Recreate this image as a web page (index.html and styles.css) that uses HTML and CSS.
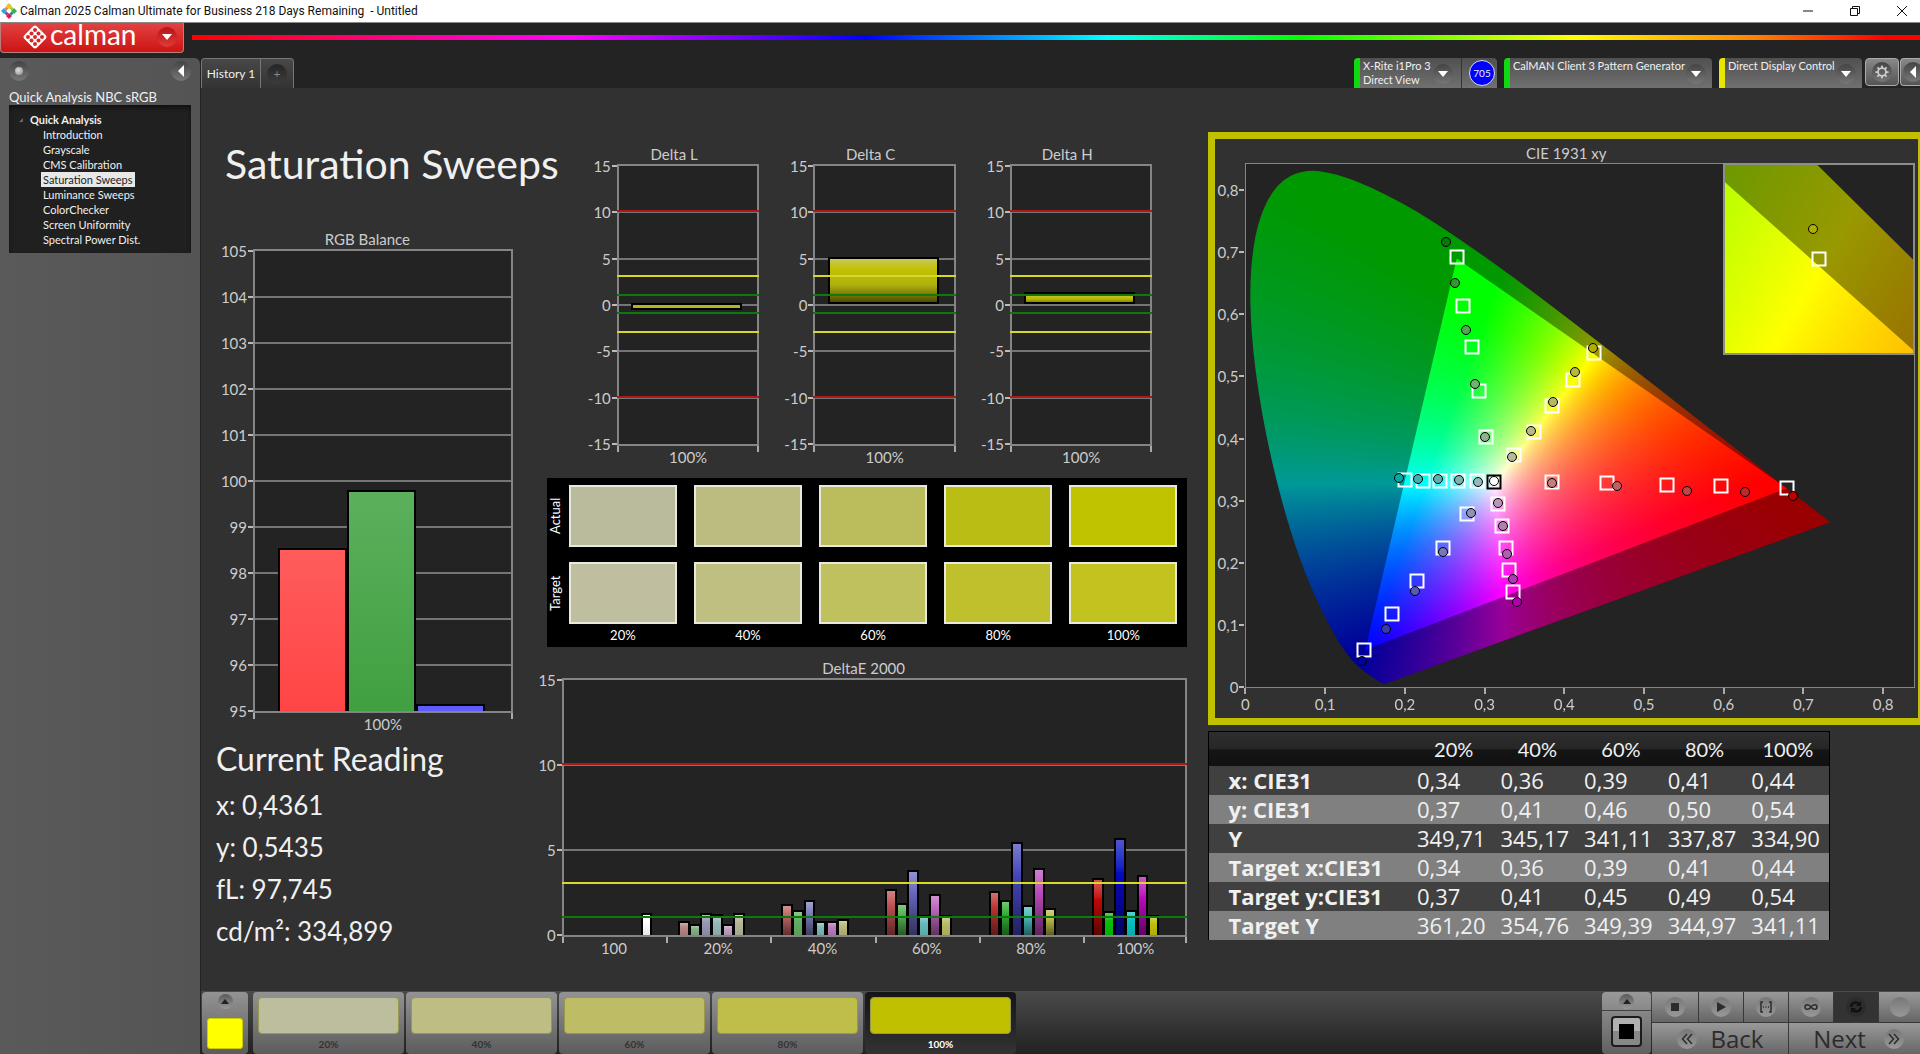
FILE: index.html
```html
<!DOCTYPE html>
<html lang="en">
	<head>
		<meta charset="UTF-8" />
		<meta name="viewport" content="width=device-width, initial-scale=1.0" />
		<title>Calman 2025 Calman Ultimate for Business</title>
		<link rel="stylesheet" href="styles.css">
	</head>
	<body>
		<header class="titlebar">
			<svg class="app-icon" viewBox="0 0 16 16" width="16" height="16">
				<path fill="#f2c21b" d="M8 0l3 3-3 3-3-3z" />
				<path fill="#28a9e0" d="M3 5l3 3-3 3-3-3z" />
				<path fill="#3fae49" d="M13 5l3 3-3 3-3-3z" />
				<path fill="#e5174d" d="M8 10l3 3-3 3-3-3z" />
				<path fill="#f58a1f" d="M5.5 3.5l2 2-2 2-2-2z" />
				<path fill="#9ccb3b" d="M10.5 3.5l2 2-2 2-2-2z" />
				<path fill="#8e3a97" d="M5.5 8.5l2 2-2 2-2-2z" />
				<path fill="#16948c" d="M10.5 8.5l2 2-2 2-2-2z" />
			</svg>
			<span class="window-title">Calman 2025 Calman Ultimate for Business 218 Days Remaining &nbsp;- Untitled</span>
			<div class="window-buttons">
				<button aria-label="Minimize"><svg viewBox="0 0 12 12" width="12" height="12"><path d="M1 6h10" /></svg></button>
				<button aria-label="Restore"><svg viewBox="0 0 12 12" width="12" height="12"><path d="M1.5 3.5h7v7h-7zM3.5 3.5v-2h7v7h-2" /></svg></button>
				<button aria-label="Close"><svg viewBox="0 0 12 12" width="12" height="12"><path d="M1 1l10 10M11 1L1 11" /></svg></button>
			</div>
		</header>
		<div class="brandbar">
			<button class="brand">
				<svg viewBox="0 0 24 24" width="24" height="24">
					<path fill="#fff" d="M12 0.5q1 0 2 1l8.500 8.500q2 2 0 4L14 22.500q-2 2-4 0L1.500 14q-2-2 0-4L10 1.500q1-1 2-1z" />
					<g fill="#dc2626">
						<circle cx="12" cy="5" r="2" /><circle cx="8.5" cy="8.5" r="2" /><circle cx="15.5" cy="8.5" r="2" />
						<circle cx="5" cy="12" r="2" /><circle cx="12" cy="12" r="2" /><circle cx="19" cy="12" r="2" />
						<circle cx="8.5" cy="15.5" r="2" /><circle cx="15.5" cy="15.5" r="2" /><circle cx="12" cy="19" r="2" />
					</g>
				</svg>
				<span>calman</span>
				<i class="knob knob-red"><svg viewBox="0 0 10 6" width="10" height="6"><path d="M0 0h10L5 6z" /></svg></i>
			</button>
			<div class="rainbow"></div>
		</div>
		<div class="shell">
			<aside class="sidebar">
				<div class="sidebar-top">
					<button class="knob" aria-label="Record"><i class="lamp"></i></button>
					<button class="knob" aria-label="Collapse"><svg viewBox="0 0 6 12" width="6" height="12"><path d="M6 0v12L0 6z" /></svg></button>
				</div>
				<h2>Quick Analysis NBC sRGB</h2>
				<nav class="tree">
					<strong>Quick Analysis</strong>
					<a href="#">Introduction</a>
					<a href="#">Grayscale</a>
					<a href="#">CMS Calibration</a>
					<a href="#" class="current">Saturation Sweeps</a>
					<a href="#">Luminance Sweeps</a>
					<a href="#">ColorChecker</a>
					<a href="#">Screen Uniformity</a>
					<a href="#">Spectral Power Dist.</a>
				</nav>
			</aside>
			<main>
				<div class="toolbar">
					<div class="tabs">
						<button class="tab">History 1</button>
						<button class="tab tab-add" aria-label="Add tab"><i class="knob knob-dark">+</i></button>
					</div>
					<div class="devices">
						<div class="device green meter">
							<button class="device-pick"><span>X-Rite i1Pro 3<br />Direct View</span><i class="knob"><svg viewBox="0 0 10 6" width="10" height="6"><path d="M0 0h10L5 6z" /></svg></i></button>
							<span class="badge">705</span>
						</div>
						<div class="device green generator">
							<button class="device-pick"><span>CalMAN Client 3 Pattern Generator</span><i class="knob"><svg viewBox="0 0 10 6" width="10" height="6"><path d="M0 0h10L5 6z" /></svg></i></button>
						</div>
						<div class="device yellow display">
							<button class="device-pick"><span>Direct Display Control</span><i class="knob"><svg viewBox="0 0 10 6" width="10" height="6"><path d="M0 0h10L5 6z" /></svg></i></button>
						</div>
						<button class="square-btn" aria-label="Settings"><i class="knob"><svg viewBox="0 0 16 16" width="14" height="14"><g class="gear"><circle cx="8" cy="8" r="4.5" /><path d="M8 .5v3M8 12.5v3M.5 8h3M12.5 8h3M2.7 2.7l2.1 2.1M11.2 11.2l2.1 2.1M13.3 2.7l-2.1 2.1M4.8 11.2l-2.1 2.1" /></g></svg></i></button>
						<button class="square-btn cut" aria-label="Expand"><i class="knob"><svg viewBox="0 0 6 12" width="6" height="12"><path d="M6 0v12L0 6z" /></svg></i></button>
					</div>
				</div>

				<div class="workspace">
					<section class="left">
						<h1>Saturation Sweeps</h1>
						<figure class="chart rgb-balance" id="rgb"><figcaption>RGB Balance</figcaption></figure>
						<div class="reading">
							<h2>Current Reading</h2>
							<p>x: 0,4361</p>
							<p>y: 0,5435</p>
							<p>fL: 97,745</p>
							<p>cd/m²: 334,899</p>
						</div>
					</section>

					<section class="middle">
						<div class="deltas">
							<figure class="chart delta" id="deltaL"><figcaption>Delta L</figcaption></figure>
							<figure class="chart delta" id="deltaC"><figcaption>Delta C</figcaption></figure>
							<figure class="chart delta" id="deltaH"><figcaption>Delta H</figcaption></figure>
						</div>
						<div class="patches" id="patches">
							<span class="side">Actual</span>
							<span class="side">Target</span>
						</div>
						<figure class="chart delta-e" id="deltaE"><figcaption>DeltaE 2000</figcaption></figure>
					</section>

					<section class="right">
						<figure class="chart cie" id="cie">
							<figcaption>CIE 1931 xy</figcaption>
							<div class="plot">
								<canvas></canvas>
								<div class="inset"><canvas></canvas></div>
							</div>
						</figure>
						<table class="readings">
							<thead>
								<tr><th></th><th>20%</th><th>40%</th><th>60%</th><th>80%</th><th>100%</th></tr>
							</thead>
							<tbody>
								<tr><th>x: CIE31</th><td>0,34</td><td>0,36</td><td>0,39</td><td>0,41</td><td>0,44</td></tr>
								<tr><th>y: CIE31</th><td>0,37</td><td>0,41</td><td>0,46</td><td>0,50</td><td>0,54</td></tr>
								<tr><th>Y</th><td>349,71</td><td>345,17</td><td>341,11</td><td>337,87</td><td>334,90</td></tr>
								<tr><th>Target x:CIE31</th><td>0,34</td><td>0,36</td><td>0,39</td><td>0,41</td><td>0,44</td></tr>
								<tr><th>Target y:CIE31</th><td>0,37</td><td>0,41</td><td>0,45</td><td>0,49</td><td>0,54</td></tr>
								<tr><th>Target Y</th><td>361,20</td><td>354,76</td><td>349,39</td><td>344,97</td><td>341,11</td></tr>
							</tbody>
						</table>
					</section>
				</div>

				<footer class="dock">
					<button class="dock-color" aria-label="Current color"><i class="knob knob-small"><svg viewBox="0 0 10 6" width="8" height="5"><path d="M0 6h10L5 0z" /></svg></i><span></span></button>
					<div class="steps">
						<button class="step"><i class="s20"></i>20%</button>
						<button class="step"><i class="s40"></i>40%</button>
						<button class="step"><i class="s60"></i>60%</button>
						<button class="step"><i class="s80"></i>80%</button>
						<button class="step active"><i class="s100"></i>100%</button>
					</div>
					<div class="transport">
						<div class="pattern">
							<button class="pattern-up" aria-label="Show patterns"><i class="knob knob-small"><svg viewBox="0 0 10 6" width="8" height="5"><path d="M0 6h10L5 0z" /></svg></i></button>
							<button class="pattern-window" aria-label="Pattern window"><i></i></button>
						</div>
						<div class="keys">
							<button aria-label="Stop"><i class="knob"><svg viewBox="0 0 16 16" width="16" height="16"><path d="M4 4h8v8H4z" /></svg></i></button>
							<button aria-label="Play"><i class="knob"><svg viewBox="0 0 16 16" width="16" height="16"><path d="M4 3l9 5-9 5z" /></svg></i></button>
							<button aria-label="Read series"><i class="knob"><svg viewBox="0 0 16 16" width="16" height="16"><path class="line" d="M5 3H3v10h2M11 3h2v10h-2M5 8h1M7.5 8h1M10 8h1" /></svg></i></button>
							<button aria-label="Read continuous"><i class="knob"><svg viewBox="0 0 16 16" width="16" height="16"><path class="line" d="M8 8C6 5 2 5 2 8s4 3 6 0 6-3 6 0-4 3-6 0z" /></svg></i></button>
							<button class="pressed" aria-label="Refresh"><i class="knob"><svg viewBox="0 0 16 16" width="16" height="16"><path class="line thick" d="M3 8c0-4 5-6 8-3M13 8c0 4-5 6-8 3" /><path d="M13 2v5H8zM3 14V9h5z" /></svg></i></button>
							<button aria-label="Blank"><i class="knob"></i></button>
							<button class="wide back"><i class="knob"><svg viewBox="0 0 16 16" width="16" height="16"><path class="line" d="M8 3L3.5 8 8 13M13 3L8.5 8l4.5 5" /></svg></i>Back</button>
							<button class="wide next">Next<i class="knob"><svg viewBox="0 0 16 16" width="16" height="16"><path class="line" d="M8 3l4.5 5L8 13M3 3l4.5 5L3 13" /></svg></i></button>
						</div>
					</div>
				</footer>
			</main>
		</div>
		<script src="charts.js"></script>
	</body>
</html>
```
FILE: styles.css
```css
* {
	box-sizing: border-box;
}
body {
	margin: 0px;
	min-height: 100vh;
	display: flex;
	flex-direction: column;
	overflow-x: hidden;
	background: #232323;
	color: #f0f0f0;
	font-family: Lato, "Liberation Sans", sans-serif;
	font-size: 14px;
}
button {
	border: none;
	padding: 0px;
	background: none;
	color: inherit;
	font: inherit;
	cursor: pointer;
}
h1, h2, p, figure {
	margin: 0px;
	font-weight: normal;
}
svg {
	display: block;
}

/* title bar */
.titlebar {
	height: 23px;
	display: flex;
	align-items: center;
	background: #fff;
	border-bottom: 1px solid #888;
	color: #111;
	font-family: Roboto, sans-serif;
	font-size: 12px;
}
.app-icon {
	margin: 0px 3px 0px 1px;
}
.window-buttons {
	margin-left: auto;
	display: flex;
	gap: 35px;
	padding-right: 12px;
}
.window-buttons path {
	fill: none;
	stroke: #111;
}

/* brand row */
.brandbar {
	height: 35px;
	display: flex;
	align-items: flex-start;
	gap: 8px;
}
.brand {
	width: 184px;
	height: 30px;
	display: flex;
	align-items: center;
	padding: 0px 6px 2px 22px;
	border: 1px solid #b97f7f;
	border-top: none;
	border-radius: 0px 0px 4px 4px;
	background: linear-gradient(#e04343, #d92a2a 50%, #cc1414);
	color: #fff;
}
.brand span {
	margin-left: 3px;
	font-size: 28px;
	line-height: 26px;
	padding-bottom: 5px;
}
.rainbow {
	flex: 1;
	height: 5px;
	margin-top: 12px;
	background: linear-gradient(90deg, #f00, #f0f 22%, #00f 39%, #0ff 53%, #0f0 64%, #ff0 80%, #f80 90%, #f00 98%);
}

.knob {
	display: flex;
	align-items: center;
	justify-content: center;
	flex: none;
	width: 20px;
	height: 20px;
	border-radius: 50%;
	background: linear-gradient(#444, #777);
	fill: #fff;
	font-style: normal;
}
.knob-red {
	margin-left: auto;
	background: linear-gradient(#b81414, #e03a3a);
}
.knob-dark {
	background: linear-gradient(#262626, #3c3c3c);
	color: #888;
}
.knob-small {
	width: 15px;
	height: 15px;
	fill: #222;
	background: linear-gradient(#5a5a5a, #999);
}

.shell {
	flex: 1;
	display: flex;
}
.sidebar {
	flex: none;
	width: 201px;
	padding: 3px 9px 0px 9px;
	border-right: 1px solid #222;
	border-radius: 0px 6px 0px 0px;
	background: linear-gradient(90deg, #5a5a5a, #545454);
}
.sidebar-top {
	display: flex;
	justify-content: space-between;
}
.lamp {
	width: 8px;
	height: 8px;
	border-radius: 50%;
	background: radial-gradient(circle at 40% 40%, #ddd, #888);
}
.sidebar h2 {
	margin: 8px 0px 0px;
	font-size: 13px;
	line-height: 16px;
}
.tree {
	display: flex;
	flex-direction: column;
	align-items: flex-start;
	height: 148px;
	padding: 7px 0px 0px 21px;
	background: #202020;
	box-shadow: inset 0px 3px 4px #111;
	font-size: 11px;
	line-height: 15px;
}
.tree strong {
	position: relative;
}
.tree strong::before {
	content: "";
	position: absolute;
	left: -11px;
	top: 6px;
	border: 2px solid transparent;
	border-right-color: #666;
	border-bottom-color: #666;
}
.tree a {
	margin-left: 11px;
	padding: 0px 2px;
	color: inherit;
	text-decoration: none;
}
.tree .current {
	background: #e8e8e8;
	color: #222;
}

main {
	flex: 1;
	min-width: 0px;
	display: flex;
	flex-direction: column;
	background: #313131;
}
.toolbar {
	height: 30px;
	display: flex;
	justify-content: space-between;
	background: #232323;
}
.tabs {
	display: flex;
	border: 1px solid #777;
	border-bottom: none;
	border-radius: 4px 4px 0px 0px;
	background: linear-gradient(#484848, #333);
}
.tab {
	width: 58px;
	font-size: 12px;
}
.tab-add {
	width: 33px;
	display: flex;
	align-items: center;
	justify-content: center;
	border-left: 1px solid #777;
}
.devices {
	display: flex;
	font-size: 11px;
	line-height: 14px;
}
.device {
	display: flex;
	margin-right: 7px;
	border-left: 6px solid #12d812;
	border-radius: 4px 4px 0px 0px;
	background: linear-gradient(#505050, #707070);
}
.device.yellow {
	margin-right: 3px;
	border-left-color: #e6e600;
}
.device-pick {
	flex: 1;
	display: flex;
	justify-content: space-between;
	padding: 1px 6px 0px 3px;
	text-align: left;
	white-space: nowrap;
}
.device .knob {
	align-self: center;
}
.meter {
	width: 143px;
}
.generator {
	width: 208px;
}
.display {
	width: 143px;
}
.badge {
	width: 26px;
	height: 26px;
	margin: 2px 2px 0px 7px;
	border: 1px solid #dde;
	border-radius: 50%;
	background: #00f;
	font-size: 10px;
	line-height: 25px;
	text-align: center;
}
.meter .device-pick {
	border-right: 1px solid #333;
	padding-right: 8px;
}
.square-btn {
	width: 34px;
	height: 28px;
	display: flex;
	align-items: center;
	justify-content: center;
	margin-right: 1px;
	border: 1px solid #aaa;
	border-radius: 4px;
	background: linear-gradient(#888, #555);
}
.square-btn.cut {
	width: 20px;
	margin-right: 0px;
	padding-left: 4px;
	border-right: none;
	border-radius: 4px 0px 0px 4px;
}
.gear {
	fill: none;
	stroke: #ccc;
	stroke-width: 2;
}

/* main page */
.workspace {
	flex: 1;
	display: grid;
	grid-template-columns: 346fr 641fr 733fr;
}
.workspace > section {
	min-width: 0px;
}
.left {
	padding: 52px 34px 0px 21px;
}
.middle {
	padding-top: 57px;
}
.right {
	padding: 44px 0px 0px 21px;
}
h1 {
	margin: 0px 0px 42px 3px;
	font-size: 41px;
	line-height: 48px;
	white-space: nowrap;
}
.reading {
	margin: 6px 0px 0px -6px;
	white-space: nowrap;
}
.reading h2 {
	font-size: 32px;
	line-height: 36px;
	margin-bottom: 7px;
}
.reading p {
	font-size: 26px;
	line-height: 42px;
}

/* charts */
.chart {
	--axis: 28px;
	color: #ccc;
	font-size: 15px;
}
.chart figcaption {
	padding-bottom: 1px;
	line-height: 18px;
	text-align: center;
}
.plot {
	position: relative;
	margin-left: var(--axis);
	border: 2px solid #858585;
	background: #232323;
}
.grid-line, .limit, .bar, .y-label, .mark {
	position: absolute;
}
.grid-line {
	left: 0px;
	right: 0px;
	height: 2px;
	margin-top: -1px;
	background: #757575;
}
.limit {
	left: -2px;
	right: -2px;
	height: 2px;
	margin-top: -2px;
}
.limit.red {
	background: #b01818;
}
.limit.yellow {
	background: #d8d82c;
}
.limit.green {
	background: #0e7a0e;
}
.bar {
	border: 2px solid #000;
	border-bottom-width: 0px;
}
.y-label {
	right: 100%;
	display: flex;
	align-items: center;
	gap: 1px;
	margin-right: 2px;
	line-height: 16px;
	transform: translateY(-50%);
}
.y-label::after {
	content: "";
	width: 5px;
	height: 2px;
	background: #bbb;
}
.x-axis {
	display: flex;
	height: 22px;
	margin-left: var(--axis);
	line-height: 22px;
	background: linear-gradient(#aaa, #aaa) right top / 2px 6px no-repeat;
}
.x-axis span {
	flex: 1;
	text-align: center;
	background: linear-gradient(#aaa, #aaa) left top / 2px 6px no-repeat;
}
.rgb-balance {
	--axis: 31px;
}
.rgb-balance .plot {
	height: 464px;
}
.deltas {
	display: flex;
	gap: 26px;
	padding: 0px 35px 0px 42px;
}
.delta {
	flex: 1;
}
.delta .plot {
	height: 282px;
}
.delta-e {
	--axis: 22px;
	margin: 12px 0px 0px -7px;
}
.delta-e .plot {
	height: 259px;
}

/* color patches, the side captions hang over the narrow first column */
.patches {
	display: grid;
	grid-template-columns: 5px repeat(5, 1fr);
	grid-template-rows: 62px 62px 16px;
	column-gap: 17px;
	row-gap: 15px;
	height: 169px;
	margin-top: 10px;
	padding: 7px 10px 0px 0px;
	background: #000;
	color: #fff;
	font-size: 13px;
}
.side {
	grid-column: 1;
	width: 17px;
	writing-mode: vertical-rl;
	transform: rotate(180deg);
	text-align: center;
	line-height: 17px;
}
.patch {
	border: 2px solid #e8e8dc;
}
.patch-label {
	margin-top: -12px;
	line-height: 16px;
	text-align: center;
}

/* chromaticity diagram */
.cie {
	padding: 5px 3px 8px 2px;
	border: 7px solid #c0bf00;
	border-right-width: 2px;
}
.cie .plot {
	height: 525px;
	border-width: 1px;
}
.cie canvas {
	display: block;
	position: absolute;
	width: 100%;
	height: 100%;
}
.cie .x-axis {
	position: relative;
	background: none;
}
.cie .x-axis span {
	position: absolute;
	width: 40px;
	padding-top: 5px;
	transform: translateX(-50%);
	background-position: center top;
}
.inset {
	position: absolute;
	top: -1px;
	right: -1px;
	width: 192px;
	height: 192px;
	overflow: hidden;
	border: 2px solid #8d8d8d;
	background: #232323;
}
.mark {
	transform: translate(-50%, -50%);
}
.mark.target {
	width: 15px;
	height: 15px;
	border: 2px solid #fff;
}
.mark.white {
	border-color: #000;
}
.mark.actual {
	width: 10px;
	height: 10px;
	border: 1px solid #000;
	border-radius: 50%;
}

.readings {
	width: 622px;
	margin-top: 6px;
	table-layout: fixed;
	border: 1px solid #000;
	border-bottom: none;
	border-collapse: collapse;
	font-family: "Open Sans", sans-serif;
	font-size: 22px;
	line-height: 28px;
	color: #f0f0f0;
}
.readings th, .readings td {
	height: 29px;
	padding: 0px 0px 0px 5px;
	text-align: left;
	white-space: nowrap;
}
.readings tbody th {
	padding-left: 19px;
}
.readings thead tr {
	background: linear-gradient(#2e2e2e, #262626 50%, #151515 52%, #111);
}
.readings thead th {
	height: 34px;
	padding: 0px;
	font-family: Lato, sans-serif;
	font-size: 20px;
	font-weight: normal;
	text-align: center;
}
.readings thead th:first-child {
	width: 203px;
}
.readings tbody tr {
	background: #404040;
}
.readings tbody tr:nth-child(even) {
	background: #808080;
}

/* bottom dock */
.dock {
	height: 63px;
	display: flex;
	padding: 1px 0px 0px 1px;
	background: linear-gradient(#4a4a4a, #222);
}
.dock-color {
	width: 46px;
	display: flex;
	flex-direction: column;
	align-items: center;
	padding-top: 2px;
	border-radius: 4px;
	background: linear-gradient(#939393, #5c5c5c);
}
.dock-color span {
	width: 36px;
	height: 31px;
	margin-top: 9px;
	border: 1px solid #cc0;
	border-radius: 3px;
	background: #ff0;
}
.steps {
	display: flex;
	gap: 2px;
	margin-left: 5px;
}
.step {
	width: 151px;
	display: flex;
	flex-direction: column;
	align-items: center;
	padding: 5px 5px 0px;
	border-radius: 4px;
	background: linear-gradient(#939393, #5c5c5c);
	color: #333;
	font-size: 10px;
	font-weight: bold;
	line-height: 20px;
}
.step i {
	align-self: stretch;
	height: 37px;
	border: 1px solid #99994d;
	border-radius: 4px;
}
.step.active {
	background: linear-gradient(#151515, #333);
	color: #fff;
}
.s20 { background: #bdbe9e; }
.s40 { background: #bebd83; }
.s60 { background: #bebd66; }
.s80 { background: #bfbe4a; }
.s100 { background: #c0bf00; }

.transport {
	display: flex;
	margin-left: auto;
}
.pattern {
	width: 49px;
	display: flex;
	flex-direction: column;
	margin-right: 1px;
	border-radius: 4px;
	background: linear-gradient(#999, #606060);
}
.pattern-up {
	height: 19px;
	display: flex;
	align-items: center;
	justify-content: center;
	border-bottom: 1px solid #444;
}
.pattern-window {
	align-self: center;
	width: 31px;
	height: 31px;
	margin-top: 5px;
	padding: 6px;
	border: 2px solid #1c1c1c;
	border-radius: 4px;
	background: linear-gradient(#b0b0b0 50%, #888 50%);
}
.pattern-window i {
	display: block;
	height: 15px;
	background: #000;
}
.keys {
	display: grid;
	grid-template-columns: 46px 44px 44px 44px 44px 41px;
	grid-template-rows: 30px 31px;
	gap: 1px;
	background: #383838;
	color: #2c2c2c;
}
.keys button {
	display: flex;
	align-items: center;
	justify-content: center;
	overflow: hidden;
	background: linear-gradient(#999, #666);
}
.keys .knob {
	fill: #2c2c2c;
	background: linear-gradient(#777, #999);
}
.keys .line {
	fill: none;
	stroke: #2c2c2c;
	stroke-width: 1.5;
}
.keys .thick {
	stroke-width: 2.5;
}
.keys .pressed {
	background: #333;
}
.keys .pressed .knob {
	background: #2c2c2c;
	fill: #111;
}
.keys .pressed .line {
	stroke: #111;
}
.keys .wide {
	grid-column: span 3;
	gap: 14px;
	font-family: "Open Sans", sans-serif;
	font-size: 24px;
	font-weight: 500;
	line-height: 28px;
}
.keys .next {
	gap: 18px;
	padding-left: 8px;
}
```
FILE: charts.js
```js
const make = (parent, className, text) => {
	const node = document.createElement("div");
	node.className = className;
	if (text !== undefined) node.textContent = text;
	parent.appendChild(node);
	return node;
};

const makeChart = (id, { min, max, step, labels, limits = [], bars }) => {
	const chart = document.getElementById(id);
	const plot = make(chart, "plot");
	const pos = value => ((max - value) / (max - min)) * 100;
	for (let v = min; v <= max; v += step) {
		if (v > min && v < max) make(plot, "grid-line").style.top = pos(v) + "%";
		make(plot, "y-label", v).style.top = pos(v) + "%";
	}
	for (const { from, to, left, width, fill } of bars) {
		const bar = make(plot, "bar");
		bar.style.cssText = `left:${left}%;width:${width}%;top:${pos(to)}%;height:${pos(from) - pos(to)}%;background:${fill}`;
		if (from !== min) bar.style.borderBottomWidth = "2px";
	}
	for (const [value, color] of limits) make(plot, "limit " + color).style.top = pos(value) + "%";
	const axis = make(chart, "x-axis");
	for (const label of labels) {
		axis.appendChild(document.createElement("span")).textContent = label;
	}
};

makeChart("rgb", {
	min: 95, max: 105, step: 1, labels: ["100%"],
	bars: [
		{ from: 95, to: 98.55, left: 9, width: 27, fill: "linear-gradient(#ff5c5c, #ff4545)" },
		{ from: 95, to: 99.8, left: 36, width: 27, fill: "linear-gradient(#5cb05c, #40a040)" },
		{ from: 95, to: 95.15, left: 63, width: 27, fill: "#5c5cff" },
	],
});

const yellowFill = "linear-gradient(#c9c95a, #c2c100 25%, #b0b010 60%, #504c00)";
const deltaLimits = [[10, "red"], [3, "yellow"], [1, "green"], [-1, "green"], [-3, "yellow"], [-10, "red"]];
for (const [id, from, to, fill] of [
	["deltaL", -0.5, 0.2, "#b5b41c"],
	["deltaC", 0.1, 5.2, yellowFill],
	["deltaH", 0.1, 1.4, "linear-gradient(#c9c93a, #b8b700 60%, #8a8900)"],
]) {
	makeChart(id, {
		min: -15, max: 15, step: 5, labels: ["100%"], limits: deltaLimits,
		bars: [{ from, to, left: 9, width: 80, fill }],
	});
}

// deltaE, six colors in each saturation group
const errors = [
	[[6, 1.3, "#fff"]],
	[[0, .82, "#b98585"], [1, .65, "#85b085"], [2, 1.3, "#9898b8"], [3, 1.25, "#98b8b8"], [4, .65, "#c0a0c0"], [5, 1.3, "#b8b898"]],
	[[0, 1.8, "#bb6464"], [1, 1.46, "#62b062"], [2, 2.07, "#7c7cba"], [3, .8, "#7cbaba"], [4, .8, "#ba7cba"], [5, .95, "#baba7c"]],
	[[0, 2.7, "#bb5050"], [1, 1.9, "#50b050"], [2, 3.8, "#6464bb"], [3, 1.15, "#64bbbb"], [4, 2.4, "#bb64bb"], [5, 1.15, "#bbbb64"]],
	[[0, 2.6, "#bb3434"], [1, 2.05, "#34b034"], [2, 5.45, "#4444bb"], [3, 1.75, "#48bbbb"], [4, 3.95, "#bb48bb"], [5, 1.56, "#bbbb48"]],
	[[0, 3.38, "#c00808"], [1, 1.39, "#08c008"], [2, 5.68, "#0808c0"], [3, 1.46, "#08c0c0"], [4, 3.53, "#c008c0"], [5, 1.15, "#c0c008"]],
];
makeChart("deltaE", {
	min: 0, max: 15, step: 5,
	labels: ["100", "20%", "40%", "60%", "80%", "100%"],
	limits: [[10, "red"], [3, "yellow"], [1, "green"]],
	bars: errors.flatMap((group, g) => group.map(([slot, to, color]) => ({
		from: 0, to,
		left: (g + 0.1 + slot * 0.107) * 100 / 6,
		width: 1.9,
		fill: `linear-gradient(color-mix(in srgb, ${color}, #fff 30%), ${color} 35%, color-mix(in srgb, ${color}, #000 ${to > 1.5 ? 50 : 10}%))`,
	}))),
});

const patches = document.getElementById("patches");
const percents = ["20%", "40%", "60%", "80%", "100%"];
const rows = [
	["#babb9c", "#bbbc80", "#bbbd5c", "#babd14", "#c0c300"],
	["#bfbe9f", "#bfbf82", "#bfc05e", "#bfc02c", "#c3c320"],
];
rows.forEach((colors, r) => colors.forEach((color, c) => {
	make(patches, "patch").style.cssText = `background:${color};grid-row:${r + 1};grid-column:${c + 2}`;
}));
percents.forEach((text, c) => {
	make(patches, "patch-label", text).style.cssText = `grid-row:3;grid-column:${c + 2}`;
});

// chromaticity diagram
const locus = [
	[.1741, .005], [.1714, .0051], [.1644, .0109], [.1566, .0177], [.144, .0297], [.1355, .0399], [.1241, .0578],
	[.1096, .0868], [.0913, .1327], [.0687, .2007], [.0454, .295], [.0235, .4127], [.0082, .5384], [.0039, .6548],
	[.0139, .7502], [.0389, .812], [.0743, .8338], [.1142, .8262], [.1547, .8059], [.1929, .7816], [.2296, .7543],
	[.3016, .6923], [.3731, .6245], [.4441, .5547], [.5125, .4866], [.5752, .4242], [.627, .3725], [.6658, .334],
	[.6915, .3083], [.719, .2809], [.7347, .2653],
];
const gamut = [[.265, .69], [.68, .32], [.15, .06]];

const xyToRgb = (x, y) => {
	const X = x / y, Z = (1 - x - y) / y;
	const rgb = [
		3.2406 * X - 1.5372 - 0.4986 * Z,
		-0.9689 * X + 1.8758 + 0.0415 * Z,
		0.0557 * X - 0.204 + 1.057 * Z,
	].map(v => Math.max(v, 0));
	const top = Math.max(...rgb);
	return rgb.map(v => (255 * v) / top);
};

const paint = (canvas, view) => {
	const w = (canvas.width = canvas.clientWidth);
	const h = (canvas.height = canvas.clientHeight);
	const layer = shade => {
		const off = document.createElement("canvas");
		off.width = w;
		off.height = h;
		const c = off.getContext("2d");
		const image = c.createImageData(w, h);
		for (let j = 0; j < h; j++) {
			for (let i = 0; i < w; i++) {
				const x = view.x0 + (i / w) * (view.x1 - view.x0);
				const y = Math.max(view.y1 - (j / h) * (view.y1 - view.y0), 0.001);
				const rgb = xyToRgb(x, y);
				const k = (j * w + i) * 4;
				for (let n = 0; n < 3; n++) image.data[k + n] = rgb[n] * shade;
				image.data[k + 3] = 255;
			}
		}
		c.putImageData(image, 0, 0);
		return off;
	};
	const ctx = canvas.getContext("2d");
	const px = ([x, y]) => [((x - view.x0) / (view.x1 - view.x0)) * w, ((view.y1 - y) / (view.y1 - view.y0)) * h];
	const points = locus.map(px);
	ctx.save();
	ctx.beginPath();
	ctx.moveTo(...points[0]);
	for (let i = 1; i < points.length - 1; i++) {
		const [ax, ay] = points[i], [bx, by] = points[i + 1];
		ctx.quadraticCurveTo(ax, ay, (ax + bx) / 2, (ay + by) / 2);
	}
	ctx.lineTo(...points[points.length - 1]);
	ctx.closePath();
	ctx.clip();
	ctx.drawImage(layer(0.6), 0, 0);
	ctx.beginPath();
	gamut.map(px).forEach(p => ctx.lineTo(...p));
	ctx.closePath();
	ctx.clip();
	ctx.drawImage(layer(1), 0, 0);
	ctx.restore();
};

const series = [
	{
		targets: [[.265, .692], [.273, .613], [.284, .548], [.293, .477], [.301, .402]],
		actuals: [[.251, .717], [.263, .65], [.276, .575], [.288, .488], [.3, .402]],
		colors: ["#087808", "#2f9a2f", "#50a850", "#70b070", "#90b090"],
	},
	{
		targets: [[.4375, .538], [.411, .495], [.384, .452], [.362, .411], [.337, .373]],
		actuals: [[.436, .5455], [.413, .507], [.386, .459], [.358, .412], [.334, .371]],
		colors: ["#b0ae00", "#b8b840", "#b8b860", "#b8b880", "#b8b89a"],
	},
	{
		targets: [[.68, .321], [.597, .323], [.529, .326], [.454, .328], [.384, .33]],
		actuals: [[.688, .308], [.627, .314], [.554, .316], [.466, .323], [.385, .328]],
		colors: ["#c00000", "#c02828", "#c04444", "#c06060", "#c08080"],
	},
	{
		targets: [[.148, .06], [.183, .118], [.215, .171], [.247, .223], [.278, .278]],
		actuals: [[.146, .042], [.176, .094], [.212, .155], [.247, .217], [.282, .28]],
		colors: ["#0000a0", "#3838b0", "#5858b8", "#7878b8", "#9090b8"],
	},
	{
		targets: [[.3355, .1535], [.33, .189], [.327, .224], [.321, .259], [.316, .295]],
		actuals: [[.341, .137], [.3355, .174], [.3285, .214], [.323, .259], [.316, .296]],
		colors: ["#b000b0", "#b038b0", "#b060b0", "#b080b0", "#b898b8"],
	},
	{
		targets: [[.199, .334], [.222, .332], [.243, .332], [.266, .332], [.29, .332]],
		actuals: [[.1925, .337], [.2155, .3345], [.2415, .3345], [.267, .333], [.291, .33]],
		colors: ["#00a8a8", "#40b0b0", "#60b0b0", "#80b0b0", "#98b8b8"],
	},
];

const mark = (parent, view, [x, y], kind, fill) => {
	const node = make(parent, "mark " + kind);
	node.style.left = ((x - view.x0) / (view.x1 - view.x0)) * 100 + "%";
	node.style.top = ((view.y1 - y) / (view.y1 - view.y0)) * 100 + "%";
	if (fill) node.style.backgroundColor = fill;
};

const cie = document.getElementById("cie");
const plot = cie.querySelector(".plot");
const inset = cie.querySelector(".inset");
const full = { x0: 0, x1: 0.84, y0: 0, y1: 0.842 };
const near = { x0: 0.414, x1: 0.461, y0: 0.5145, y1: 0.5615 };

paint(plot.querySelector("canvas"), full);
paint(inset.querySelector("canvas"), near);
for (const { targets } of series) targets.forEach(p => mark(plot, full, p, "target"));
mark(plot, full, [.312, .33], "target white");
for (const { actuals, colors } of series) actuals.forEach((p, i) => mark(plot, full, p, "actual", colors[i]));
mark(plot, full, [.312, .332], "actual", "#fff");
mark(inset, near, series[1].targets[0], "target");
mark(inset, near, series[1].actuals[0], "actual", series[1].colors[0]);
plot.appendChild(inset);

const cieAxis = make(cie, "x-axis");
for (let i = 0; i <= 8; i++) {
	const text = i ? "0," + i : "0";
	make(plot, "y-label", text).style.top = (1 - i / 10 / full.y1) * 100 + "%";
	const label = cieAxis.appendChild(document.createElement("span"));
	label.textContent = text;
	label.style.left = (i / 10 / full.x1) * 100 + "%";
}
```
